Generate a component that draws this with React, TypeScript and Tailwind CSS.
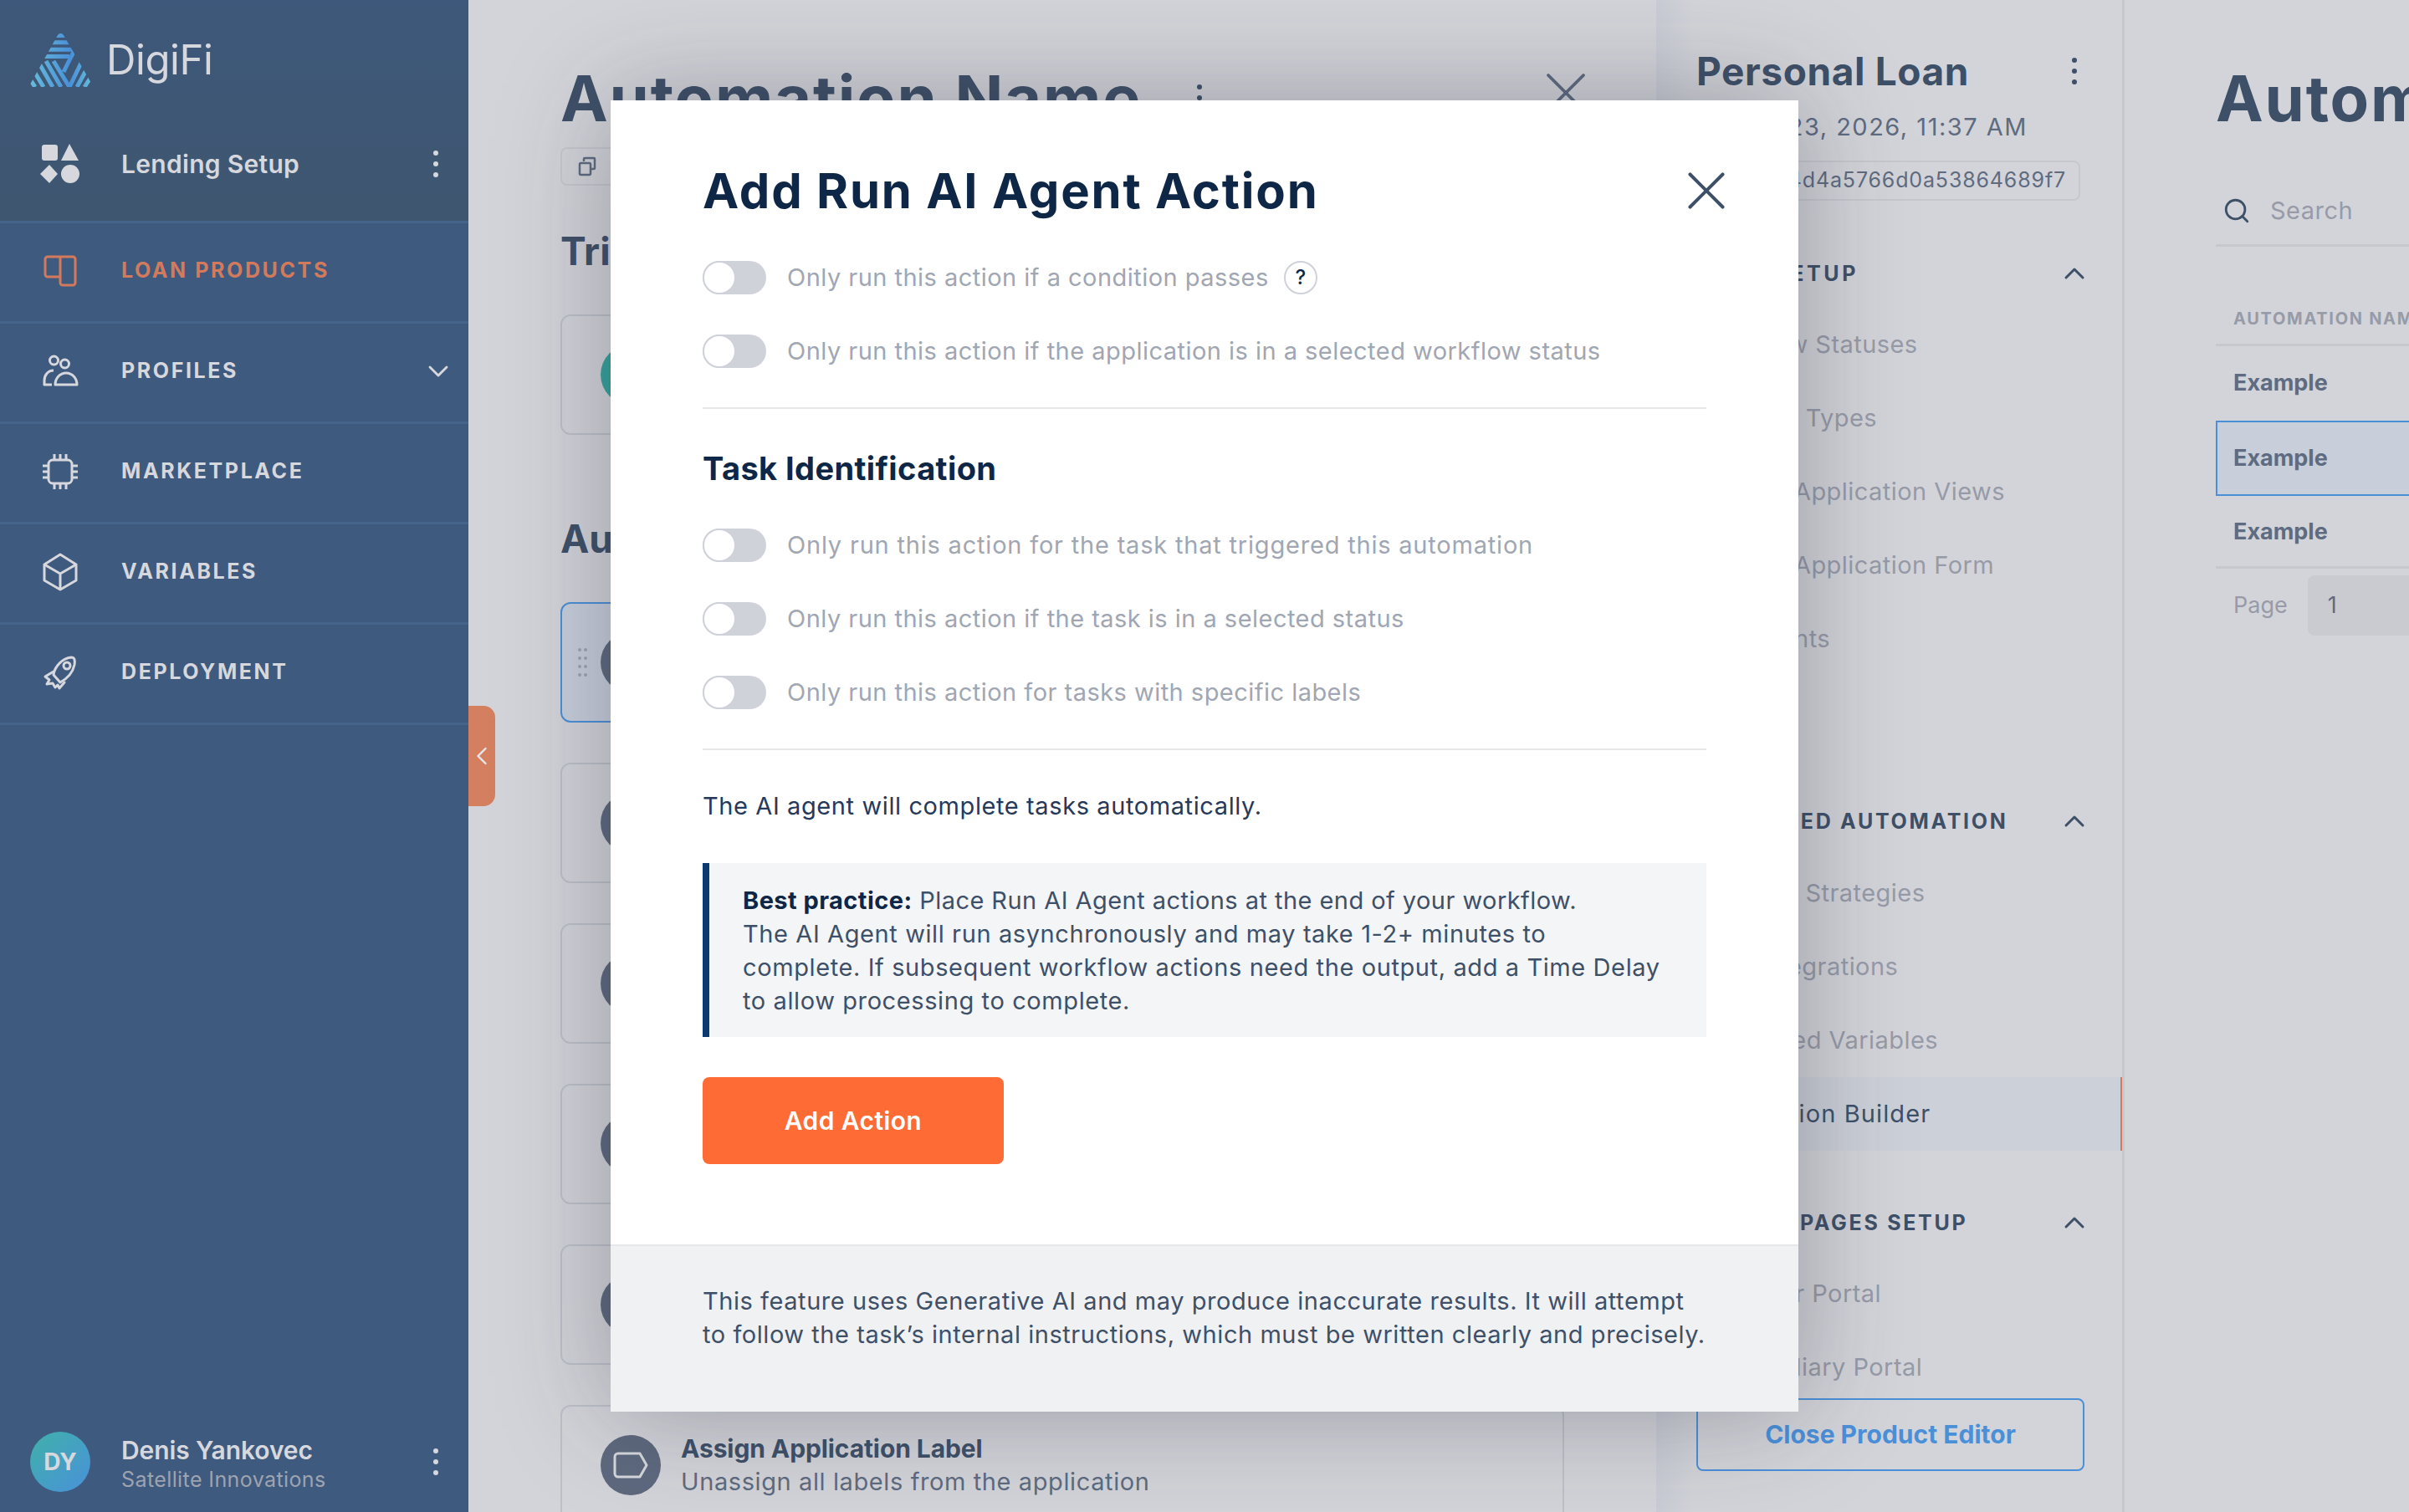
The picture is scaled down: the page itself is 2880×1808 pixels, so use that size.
import type { ReactNode } from "react";
import { ChevronLeft, ChevronDown, ChevronUp, Search, X } from "lucide-react";

function Kebab({ color = "bg-[#d6d8dd]" }: { color?: string }) {
  return (
    <div className="flex flex-col gap-[7px]">
      <span className={`h-[6px] w-[6px] rounded-full ${color}`} />
      <span className={`h-[6px] w-[6px] rounded-full ${color}`} />
      <span className={`h-[6px] w-[6px] rounded-full ${color}`} />
    </div>
  );
}

function Logo() {
  return (
    <svg width="74" height="64" viewBox="0 0 74 64" fill="none">
      <defs>
        <linearGradient id="lg" gradientUnits="userSpaceOnUse" x1="0" y1="0" x2="74" y2="0">
          <stop offset="0" stopColor="#66bcd8" />
          <stop offset="0.65" stopColor="#4a90d9" />
          <stop offset="1" stopColor="#66bcd8" />
        </linearGradient>
        <clipPath id="tri">
          <path d="M33 2a4 4 0 0 1 7 0L73.500 60a3 3 0 0 1-2 4H2.500a3 3 0 0 1-2-4z" />
        </clipPath>
      </defs>
      <g clipPath="url(#tri)" stroke="url(#lg)" strokeWidth="5">
        <path d="M20 2.500H54M12 10.800H62M8 19.200H52M0 27.500H47" />
        <path d="M11 36L27 64M4 44L16 64M-2 52L6 64M19 33L37 64M28 33L47 64" />
        <path d="M40 46L53 20M47 64L62 33M56 64L68 42M65 64L74 50" />
      </g>
    </svg>
  );
}

function ShapesIcon() {
  return (
    <svg width="48" height="48" viewBox="0 0 48 48" fill="#d6d8dd">
      <rect x="2" y="1" width="19" height="19" rx="3" />
      <path d="M35 0l11 20H25z" />
      <path d="M11 25l10 11-10 11L0 36z" />
      <circle cx="36" cy="36" r="11" />
    </svg>
  );
}

function LoanIcon() {
  return (
    <svg width="48" height="48" viewBox="0 0 48 48" fill="none" stroke="#d47a5c" strokeWidth="3" strokeLinejoin="round">
      <path d="M9 7h30a3 3 0 0 1 3 3v28a3 3 0 0 1-3 3H27a3 3 0 0 1-3-3V31H9a3 3 0 0 1-3-3V10a3 3 0 0 1 3-3z" />
      <path d="M24 31V7" />
    </svg>
  );
}

function ProfilesIcon() {
  return (
    <svg width="48" height="48" viewBox="0 0 48 48" fill="none" stroke="#d6d8dd" strokeWidth="3" strokeLinejoin="round">
      <circle cx="16.500" cy="11" r="5" />
      <circle cx="29.500" cy="15" r="5" />
      <path d="M16 23C9 23 5 29 5 35v5h9" />
      <path d="M18 40a13 14 0 0 1 26 0z" />
    </svg>
  );
}

function ChipIcon() {
  return (
    <svg width="48" height="48" viewBox="0 0 48 48" fill="none" stroke="#d6d8dd" strokeWidth="3">
      <rect x="10" y="10" width="28" height="28" rx="5" />
      <path d="M17 3v7M24 3v7M31 3v7M17 38v7M24 38v7M31 38v7M3 17h7M3 24h7M3 31h7M38 17h7M38 24h7M38 31h7" />
    </svg>
  );
}

function BoxIcon() {
  return (
    <svg width="48" height="48" viewBox="0 0 48 48" fill="none" stroke="#d6d8dd" strokeWidth="3" strokeLinejoin="round">
      <path d="M24 3l19 12v19L24 45 5 34V15z" />
      <path d="M5 15l19 11 19-11M24 26v19" />
    </svg>
  );
}

function RocketIcon() {
  return (
    <svg width="48" height="48" viewBox="0 0 48 48" fill="none" stroke="#d6d8dd" strokeWidth="3" strokeLinejoin="round" strokeLinecap="round">
      <path d="M16 27C17 17 27 7 37 6c4 0 5 3 4 9-2 9-8 16-17 21z" />
      <circle cx="32" cy="16" r="4" />
      <path d="M16 23l-10 6 5 4-3 5 7-1 3 5 3-3 2 4 6-7" />
    </svg>
  );
}

function CopyIcon() {
  return (
    <svg width="24" height="24" viewBox="0 0 24 24" fill="none" stroke="#5e6b80" strokeWidth="2.500" strokeLinejoin="round">
      <path d="M8 6V3a1 1 0 0 1 1-1h11a1 1 0 0 1 1 1v11a1 1 0 0 1-1 1h-3" />
      <rect x="3" y="8" width="13" height="14" rx="1.500" />
    </svg>
  );
}

function NavItem({ label, icon, active, chevron }: { label: string; icon: ReactNode; active?: boolean; chevron?: boolean }) {
  return (
    <div className="flex h-[120px] items-center border-b-[3px] border-[#45648a] pl-[48px] pr-[16px] pb-[3px]">
      <span className="flex w-[97px]">{icon}</span>
      <span className={`flex-1 text-[25px] font-bold tracking-[2.6px] ${active ? "text-[#d47a5c]" : "text-[#d6d8dd]"}`}>{label}</span>
      {chevron && <ChevronDown className="h-[40px] w-[40px] text-[#d6d8dd]" strokeWidth={1.7} />}
    </div>
  );
}

function Sidebar() {
  return (
    <aside className="flex h-full w-[560px] shrink-0 flex-col bg-[#3e5a7e]">
      <div className="bg-gradient-to-b from-[#3e587b] to-[#3e566f]">
        <div className="flex h-[144px] items-center pl-[36px]">
          <Logo />
          <span className="ml-[17px] text-[49px] font-normal tracking-[-0.4px] text-[#d6d8dd]">DigiFi</span>
        </div>
        <div className="flex h-[120px] items-center pl-[48px] pr-[36px] pb-[16px]">
          <span className="flex w-[97px]"><ShapesIcon /></span>
          <span className="flex-1 text-[30px] font-semibold tracking-[0.3px] text-[#d6d8dd]">Lending Setup</span>
          <Kebab />
        </div>
      </div>
      <div className="border-t-[3px] border-[#45648a]">
        <NavItem label="LOAN PRODUCTS" icon={<LoanIcon />} active />
        <NavItem label="PROFILES" icon={<ProfilesIcon />} chevron />
        <NavItem label="MARKETPLACE" icon={<ChipIcon />} />
        <NavItem label="VARIABLES" icon={<BoxIcon />} />
        <NavItem label="DEPLOYMENT" icon={<RocketIcon />} />
      </div>
      <div className="mt-auto flex h-[120px] items-center pl-[36px] pr-[36px]">
        <div className="flex h-[72px] w-[72px] items-center justify-center rounded-full bg-gradient-to-br from-[#40b0a8] to-[#4a90d9] text-[28px] font-bold text-[#d6d8dd]">DY</div>
        <div className="ml-[37px] mt-[6px] flex-1">
          <div className="text-[30px] font-semibold leading-[36px] tracking-[-0.1px] text-[#d6d8dd]">Denis Yankovec</div>
          <div className="text-[25px] leading-[34px] tracking-[0.4px] text-[#9ea3b0]">Satellite Innovations</div>
        </div>
        <Kebab />
      </div>
    </aside>
  );
}

function Card({ selected, teal, title, sub, icon }: { selected?: boolean; teal?: boolean; title?: string; sub?: string; icon?: ReactNode }) {
  return (
    <div className={`flex h-[144px] items-center rounded-[12px] border-2 ${selected ? "border-[#4a90d9] bg-[#c8cfdb]" : "border-[#bcc0c8]"}`}>
      <div className="relative ml-[46px] flex h-[72px] w-[72px] items-center justify-center">
        {selected && (
          <div className="absolute -left-[27px] grid grid-cols-2 gap-x-[3px] gap-y-[6px]">
            {[0, 1, 2, 3, 4, 5, 6, 7].map((i) => (
              <span key={i} className="h-[4px] w-[4px] rounded-full bg-[#9ea3b0]" />
            ))}
          </div>
        )}
        <div className={`flex h-[72px] w-[72px] items-center justify-center rounded-full ${teal ? "bg-[#36a39b]" : "bg-[#5e697e]"}`}>{icon}</div>
      </div>
      {title && (
        <div className="ml-[24px]">
          <div className="text-[30px] font-bold leading-[40px] tracking-[-0.1px] text-[#3e5068]">{title}</div>
          <div className="text-[29px] leading-[40px] tracking-[0.6px] text-[#5e6b80]">{sub}</div>
        </div>
      )}
    </div>
  );
}

function MainPanel() {
  return (
    <section className="h-full w-[1420px] shrink-0 overflow-hidden px-[110px]">
      <div className="flex h-[176px] items-start pt-[73px]">
        <span className="text-[76px] font-bold leading-[88px] tracking-[1.8px] text-[#3e5068]">Automation Name</span>
        <div className="ml-[66px] mt-[28px]"><Kebab color="bg-[#3e5068]" /></div>
        <X className="-mr-[44px] -mt-[4px] ml-auto h-[84px] w-[84px] text-[#5e6b80]" strokeWidth={1.1} />
      </div>
      <div className="flex h-[46px] w-[280px] items-center rounded-[8px] border-2 border-[#c6c8ce] pl-[18px]">
        <CopyIcon />
      </div>
      <h2 className="mt-[52px] text-[46px] font-bold leading-[52px] text-[#3e5068]">Trigger</h2>
      <div className="mt-[50px]"><Card teal /></div>
      <h2 className="mt-[98px] text-[46px] font-bold leading-[52px] text-[#3e5068]">Automation</h2>
      <div className="mt-[50px] flex flex-col gap-[48px]">
        <Card selected />
        <Card />
        <Card />
        <Card />
        <Card />
        <Card
          title="Assign Application Label"
          sub="Unassign all labels from the application"
          icon={
            <svg width="44" height="34" viewBox="0 0 44 34" fill="none" stroke="#d6d8dd" strokeWidth="3" strokeLinejoin="round">
              <path d="M7 3h26l8 14-8 14H7a4 4 0 0 1-4-4V7a4 4 0 0 1 4-4z" />
            </svg>
          }
        />
      </div>
    </section>
  );
}

function SubHeader({ label, wide }: { label: string; wide?: boolean }) {
  return (
    <div className="flex h-[44px] items-center justify-between">
      <span className={`whitespace-nowrap pt-[2px] text-[25px] font-bold text-[#3e5068] ${wide ? "tracking-[3.6px]" : "tracking-[2.7px]"}`}>{label}</span>
      <ChevronUp className="-mr-[11px] h-[40px] w-[40px] text-[#3e5068]" strokeWidth={1.8} />
    </div>
  );
}

function SubItem({ label, active }: { label: string; active?: boolean }) {
  return (
    <div className={`-mx-[48px] flex h-[88px] items-center whitespace-nowrap pl-[48px] text-[29px] ${active ? "border-r-2 border-[#d47a5c] bg-[#ccd0d8] tracking-[1.1px] text-[#3e5068]" : "tracking-[0.45px] text-[#979ba8]"}`}>
      {label}
    </div>
  );
}

function ProductPanel() {
  return (
    <section className="flex h-full w-[560px] shrink-0 flex-col border-r-[3px] border-[#c6c8ce] bg-gradient-to-r from-[#c9ccd5] to-[#d3d4d9] to-[8%] px-[48px]">
      <div className="mt-[59px] flex h-[52px] items-center justify-between">
        <span className="whitespace-nowrap text-[46px] font-bold tracking-[0.6px] text-[#3e5068]">Personal Loan</span>
        <div className="mr-[6px]"><Kebab color="bg-[#3e5068]" /></div>
      </div>
      <div className="mt-[21px] w-[396px] whitespace-nowrap text-right text-[29px] leading-[40px] tracking-[1.5px] text-[#5e6b80]">Jan 23, 2026, 11:37 AM</div>
      <div className="mt-[20px] flex h-[48px] w-[459px] items-center justify-end rounded-[8px] border-2 border-[#c6c8ce] pr-[15px] text-[25px] tracking-[0.85px] text-[#5e6b80]">
        64d4a5766d0a53864689f7
      </div>
      <div className="mt-[65px]"><SubHeader label="LOAN SETUP" wide /></div>
      <div className="mt-[19px]">
        <SubItem label="Workflow Statuses" />
        <SubItem label="Contract Types" />
        <SubItem label="Custom Application Views" />
        <SubItem label="Custom Application Form" />
        <SubItem label="Documents" />
      </div>
      <div className="mt-[152px]"><SubHeader label="ADVANCED AUTOMATION" /></div>
      <div className="mt-[20px]">
        <SubItem label="Decision Strategies" />
        <SubItem label="Data Integrations" />
        <SubItem label="Calculated Variables" />
        <SubItem label="Automation Builder" active />
      </div>
      <div className="mt-[64px]"><SubHeader label="PORTAL PAGES SETUP" /></div>
      <div className="mt-[19px] h-[169px]">
        <SubItem label="Borrower Portal" />
        <SubItem label="Intermediary Portal" />
      </div>
      <button className="relative h-[87px] w-[464px] shrink-0 rounded-[8px] border-2 border-[#4a90d9] bg-[#d3d4d9] text-[30px] font-bold text-[#4a90d9]">Close Product Editor</button>
    </section>
  );
}

function TablePanel() {
  return (
    <section className="h-full min-w-0 flex-1 overflow-hidden pl-[109px]">
      <div className="w-[600px]">
        <div className="whitespace-nowrap pt-[73px] text-[76px] font-bold leading-[88px] tracking-[1.8px] text-[#3e5068]">Automation Builder</div>
        <div className="mt-[47px] flex h-[87px] items-center border-b-[3px] border-[#c6c8ce] pl-[8px] pt-[4px]">
          <Search className="h-[34px] w-[34px] text-[#3e5068]" strokeWidth={2} />
          <span className="ml-[23px] text-[29px] tracking-[0.5px] text-[#979ba8]">Search</span>
        </div>
        <div className="mt-[55px] flex h-[64px] items-center whitespace-nowrap border-b-[3px] border-[#c6c8ce] pl-[21px] text-[20px] font-bold tracking-[1.7px] text-[#979ba8]">AUTOMATION NAME</div>
        <div className="flex h-[89px] items-center pl-[21px] text-[27px] font-bold text-[#5e6b80]">Example</div>
        <div className="flex h-[90px] items-center border-2 border-[#4a90d9] bg-[#c8cfdb] pl-[19px] text-[27px] font-bold text-[#5e6b80]">Example</div>
        <div className="flex h-[87px] items-center border-b-[3px] border-[#c6c8ce] pl-[21px] pt-[2px] text-[27px] font-bold text-[#5e6b80]">Example</div>
        <div className="flex h-[88px] items-center pl-[21px]">
          <span className="text-[27px] text-[#979ba8]">Page</span>
          <div className="ml-[24px] flex h-[72px] w-[300px] items-center rounded-[8px] bg-[#c9cbd1] pl-[24px] text-[27px] text-[#5e6b80]">1</div>
        </div>
      </div>
    </section>
  );
}

function ToggleRow({ label, help, wide }: { label: string; help?: boolean; wide?: boolean }) {
  return (
    <div className="flex h-[40px] items-center">
      <div className="relative h-[40px] w-[76px] rounded-full bg-[#cfd2d9]">
        <div className="absolute left-0 top-0 h-[40px] w-[40px] rounded-full border-2 border-[#cfd2d9] bg-white" />
      </div>
      <span className={`ml-[25px] text-[29px] text-[#a0a6b2] ${wide ? "tracking-[0.8px]" : "tracking-[0.47px]"}`}>{label}</span>
      {help && (
        <span className="ml-[18px] flex h-[40px] w-[40px] items-center justify-center rounded-full border-2 border-[#cfd2d9] text-[24px] font-medium text-[#0f2747]">?</span>
      )}
    </div>
  );
}

function Modal() {
  return (
    <div className="absolute left-[730px] top-[120px] flex h-[1568px] w-[1420px] flex-col bg-white shadow-[0_0_120px_rgba(40,44,60,0.35)]">
      <div className="flex-1 px-[110px]">
        <div className="mt-[72px] flex h-[72px] items-center justify-between">
          <h1 className="text-[58px] font-bold leading-[72px] tracking-[1.8px] text-[#0f2747]">Add Run AI Agent Action</h1>
          <X className="-mr-[39px] h-[78px] w-[78px] text-[#3e5068]" strokeWidth={1.25} />
        </div>
        <div className="mt-[48px] flex flex-col gap-[48px]">
          <ToggleRow label="Only run this action if a condition passes" help />
          <ToggleRow label="Only run this action if the application is in a selected workflow status" />
        </div>
        <div className="mt-[47px] h-[2px] bg-[#e6e7ea]" />
        <h2 className="mt-[47px] text-[38px] font-bold leading-[48px] tracking-[0.4px] text-[#0f2747]">Task Identification</h2>
        <div className="mt-[48px] flex flex-col gap-[48px]">
          <ToggleRow label="Only run this action for the task that triggered this automation" wide />
          <ToggleRow label="Only run this action if the task is in a selected status" />
          <ToggleRow label="Only run this action for tasks with specific labels" />
        </div>
        <div className="mt-[47px] h-[2px] bg-[#e6e7ea]" />
        <p className="mt-[47px] text-[29px] leading-[40px] tracking-[0.6px] text-[#26395a]">The AI agent will complete tasks automatically.</p>
        <div className="mt-[48px] h-[208px] border-l-[8px] border-[#0d3a6e] bg-[#f4f5f7] py-[25px] pl-[40px] pr-[24px] text-[29px] leading-[40px] tracking-[0.45px] text-[#3e5068]">
          <p><strong className="font-bold text-[#0f2747]">Best practice:</strong> Place Run AI Agent actions at the end of your workflow.</p>
          <p className="tracking-[0.6px]">
            The AI Agent will run asynchronously and may take 1-2+ minutes to
            <br />
            complete. If subsequent workflow actions need the output, add a Time Delay
            <br />
            to allow processing to complete.
          </p>
        </div>
        <button className="mt-[48px] h-[104px] w-[360px] rounded-[8px] bg-[#ff6b35] text-[30px] font-semibold tracking-[0.4px] text-white">Add Action</button>
      </div>
      <div className="h-[200px] border-t-2 border-[#e6e7ea] bg-[#f0f1f3] px-[110px] pt-[46px] text-[29px] leading-[40px] tracking-[0.55px] text-[#3e5068]">
        This feature uses Generative AI and may produce inaccurate results. It will attempt
        <br />
        to follow the task’s internal instructions, which must be written clearly and precisely.
      </div>
    </div>
  );
}

export default function App() {
  return (
    <div className="relative flex h-[1808px] w-[2880px] overflow-hidden bg-[#d3d4d9] font-['Inter','Liberation_Sans',sans-serif]">
      <Sidebar />
      <MainPanel />
      <ProductPanel />
      <TablePanel />
      <div className="absolute left-[560px] top-[844px] flex h-[120px] w-[32px] items-center justify-center rounded-r-[14px] bg-[#d57f61]">
        <ChevronLeft className="h-[36px] w-[36px] shrink-0 text-[#e6e7ea]" strokeWidth={1.6} />
      </div>
      <Modal />
    </div>
  );
}
